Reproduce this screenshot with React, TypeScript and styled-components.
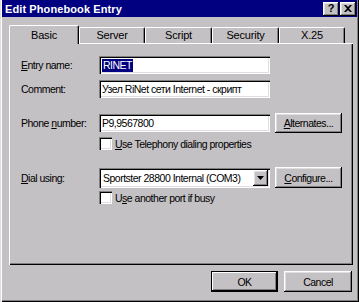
import React from "react";
import styled, { createGlobalStyle } from "styled-components";

const FACE = "#c4c1c4";

const Global = createGlobalStyle`
  html, body { margin: 0; padding: 0; background: ${FACE}; }
  body { font-family: "Liberation Sans", Arial, sans-serif; font-size: 10.5px; letter-spacing: -0.5px; color: #000; }
  * { box-sizing: border-box; }
`;

const raised = `
  box-shadow: inset -1px -1px #000, inset 1px 1px #fff, inset -2px -2px #808080, inset 2px 2px #dfdfdf;
`;
const sunken = `
  box-shadow: inset 1px 1px #808080, inset 2px 2px #000, inset -1px -1px #fff, inset -2px -2px #dfdfdf;
`;

const Window = styled.div`
  width: 359px;
  height: 302px;
  background: ${FACE};
  padding: 0 2px 2px 2px;
  box-shadow: inset 1px 0 #dfdfdf, inset 2px 0 #fff, inset -1px -1px #000, inset -2px -2px #808080;
  display: flex;
  flex-direction: column;
`;

const TitleBar = styled.div`
  height: 17px;
  background: #000080;
  display: flex;
  align-items: center;
  justify-content: space-between;
  padding: 0 1px 0 3px;
`;

const Title = styled.div`
  color: #fff;
  font-weight: bold;
  font-size: 11px;
  letter-spacing: 0.1px;
`;

const TitleButtons = styled.div`
  display: flex;
  gap: 1px;
`;

const TitleBtn = styled.div`
  width: 16px;
  height: 14px;
  background: ${FACE};
  ${raised}
  display: flex;
  align-items: center;
  justify-content: center;
  font-weight: bold;
  font-size: 11px;
  letter-spacing: 0;
  line-height: 1;
  padding-bottom: 1px;
`;

const Body = styled.div`
  flex: 1;
  display: flex;
  flex-direction: column;
  padding: 8px 4px 0 7px;
`;

const Tabs = styled.div`
  height: 18px;
  display: flex;
  align-items: flex-end;
  position: relative;
  z-index: 1;
`;

const Tab = styled.div<{ $w: number; $active?: boolean }>`
  width: ${(p) => p.$w}px;
  height: ${(p) => (p.$active ? 19 : 16)}px;
  margin-bottom: ${(p) => (p.$active ? -1 : 0)}px;
  background: ${FACE};
  border-top: 1px solid #fff;
  border-left: 1px solid #fff;
  border-right: 1px solid #000;
  border-radius: 2px 2px 0 0;
  box-shadow: inset -1px 0 #808080;
  display: flex;
  justify-content: center;
  padding-top: ${(p) => (p.$active ? 3 : 1)}px;
  font-size: 11px;
  letter-spacing: -0.2px;
`;

const Panel = styled.div`
  height: 222px;
  background: ${FACE};
  box-shadow: inset 1px 1px #fff, inset -1px -1px #000, inset -2px -2px #808080;
  padding: 13px 0 0 12px;
  display: flex;
  flex-direction: column;
`;

const Row = styled.div<{ $h: number; $mt: number; $indent?: boolean }>`
  display: flex;
  align-items: center;
  height: ${(p) => p.$h}px;
  margin-top: ${(p) => p.$mt}px;
  padding-left: ${(p) => (p.$indent ? 78 : 0)}px;
`;

const Label = styled.div`
  width: 78px;
  flex: none;
`;

const Field = styled.div`
  width: 171px;
  height: 18px;
  background: #fff;
  ${sunken}
  display: flex;
  align-items: center;
  padding-left: 3px;
  white-space: nowrap;
  overflow: hidden;
`;

const Selected = styled.span`
  background: #000080;
  color: #fff;
  padding: 0 1px;
  line-height: 13px;
`;

const Combo = styled.div`
  width: 171px;
  height: 20px;
  background: #fff;
  ${sunken}
  display: flex;
  align-items: center;
  padding: 2px 2px 2px 4px;
  white-space: nowrap;
`;

const ComboText = styled.div`
  flex: 1;
  overflow: hidden;
`;

const DropBtn = styled.div`
  width: 15px;
  height: 16px;
  background: ${FACE};
  ${raised}
  display: flex;
  align-items: center;
  justify-content: center;
`;

const Button = styled.div<{ $w: number; $h: number; $default?: boolean }>`
  width: ${(p) => p.$w}px;
  height: ${(p) => p.$h}px;
  margin-left: 5px;
  background: ${FACE};
  ${(p) =>
    p.$default
      ? `box-shadow: inset 0 0 0 1px #000, inset -2px -2px #000, inset 2px 2px #fff, inset -3px -3px #808080;`
      : raised}
  display: flex;
  align-items: center;
  justify-content: center;
`;

const Check = styled.div`
  width: 13px;
  height: 13px;
  background: #fff;
  ${sunken}
  flex: none;
  margin-right: 3px;
`;

const CheckLabel = styled.div``;

const Key = styled.span`
  text-decoration: underline;
`;

const Footer = styled.div`
  display: flex;
  justify-content: flex-end;
  gap: 1px;
  margin-top: 6px;
  padding-right: 1px;
`;

const tabs = [
  { label: "Basic", w: 70, active: true },
  { label: "Server", w: 66 },
  { label: "Script", w: 67 },
  { label: "Security", w: 67 },
  { label: "X.25", w: 66 },
];

export default function App() {
  return (
    <>
      <Global />
      <Window>
        <TitleBar>
          <Title>Edit Phonebook Entry</Title>
          <TitleButtons>
            <TitleBtn>?</TitleBtn>
            <TitleBtn>
              <svg width="8" height="7" viewBox="0 0 8 7">
                <path d="M0 0h2l2 2 2-2h2L5 3.5 8 7H6L4 5 2 7H0l3-3.5z" fill="#000" />
              </svg>
            </TitleBtn>
          </TitleButtons>
        </TitleBar>
        <Body>
          <Tabs>
            {tabs.map((t) => (
              <Tab key={t.label} $w={t.w} $active={t.active}>
                {t.label}
              </Tab>
            ))}
          </Tabs>
          <Panel>
            <Row $h={18} $mt={0}>
              <Label>
                <Key>E</Key>ntry name:
              </Label>
              <Field>
                <Selected>RINET</Selected>
              </Field>
            </Row>
            <Row $h={18} $mt={6}>
              <Label>Comment:</Label>
              <Field>Узел RiNet сети Internet - скрипт</Field>
            </Row>
            <Row $h={20} $mt={15}>
              <Label>
                Phone <Key>n</Key>umber:
              </Label>
              <Field>P9,9567800</Field>
              <Button $w={67} $h={20}>
                <span>
                  <Key>A</Key>lternates...
                </span>
              </Button>
            </Row>
            <Row $h={13} $mt={4} $indent>
              <Check />
              <CheckLabel>
                <Key>U</Key>se Telephony dialing properties
              </CheckLabel>
            </Row>
            <Row $h={21} $mt={17}>
              <Label>
                <Key>D</Key>ial using:
              </Label>
              <Combo>
                <ComboText>Sportster 28800 Internal (COM3)</ComboText>
                <DropBtn>
                  <svg width="7" height="4" viewBox="0 0 7 4">
                    <path d="M0 0h7L3.5 4z" fill="#000" />
                  </svg>
                </DropBtn>
              </Combo>
              <Button $w={67} $h={21}>
                <span>
                  <Key>C</Key>onfigure...
                </span>
              </Button>
            </Row>
            <Row $h={13} $mt={3} $indent>
              <Check />
              <CheckLabel>
                U<Key>s</Key>e another port if busy
              </CheckLabel>
            </Row>
          </Panel>
          <Footer>
            <Button $w={67} $h={21} $default>
              OK
            </Button>
            <Button $w={68} $h={21}>
              Cancel
            </Button>
          </Footer>
        </Body>
      </Window>
    </>
  );
}
